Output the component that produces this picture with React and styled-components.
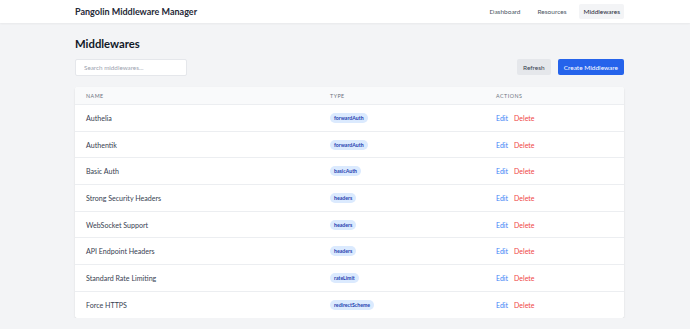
import React from "react";
import styled, { createGlobalStyle } from "styled-components";

const Global = createGlobalStyle`
  html, body { margin: 0; padding: 0; background: #f3f4f6; }
  body { font-family: Lato, "Noto Sans", sans-serif; color: #1f2937; }
  * { box-sizing: border-box; }
`;

const Header = styled.header`
  background: #ffffff;
  height: 23px;
  box-shadow: 0 1px 2px rgba(0,0,0,0.05);
`;

const HeaderInner = styled.div`
  margin-left: 75px;
  width: 549px;
  height: 100%;
  display: flex;
  align-items: center;
  justify-content: space-between;
`;

const Brand = styled.div`
  font-size: 9px;
  font-weight: 700;
  color: #1f2937;
`;

const Nav = styled.nav`
  display: flex;
  align-items: center;
  gap: 9px;
`;

const NavLink = styled.a`
  font-size: 6.5px;
  color: ${(p) => (p.$active ? "#1f2937" : "#4b5563")};
  background: ${(p) => (p.$active ? "#f3f4f6" : "transparent")};
  padding: 4px 4px;
  border-radius: 2px;
  line-height: 7px;
`;

const Main = styled.main`
  margin-left: 75px;
  width: 549px;
  padding-top: 12px;
`;

const Title = styled.h1`
  margin: 0;
  font-size: 11.3px;
  font-weight: 700;
  color: #111827;
  line-height: 17px;
`;

const Toolbar = styled.div`
  margin-top: 7px;
  display: flex;
  align-items: flex-start;
  justify-content: space-between;
`;

const Search = styled.input`
  width: 112px;
  height: 17px;
  border: 1px solid #e5e7eb;
  background: #fff;
  border-radius: 2px;
  padding: 0 8px;
  font-family: inherit;
  font-size: 6.3px;
  outline: none;
  &::placeholder { color: #9ca3af; }
`;

const Buttons = styled.div`
  display: flex;
  gap: 7px;
`;

const Button = styled.button`
  font-family: inherit;
  font-size: 6.5px;
  height: 16px;
  border: none;
  border-radius: 2px;
  padding: 0 ${(p) => (p.$primary ? "6px" : "6px")};
  background: ${(p) => (p.$primary ? "#2563eb" : "#e5e7eb")};
  color: ${(p) => (p.$primary ? "#ffffff" : "#374151")};
`;

const Card = styled.div`
  margin-top: 11px;
  background: #fff;
  border-radius: 3px;
  box-shadow: 0 1px 2px rgba(0,0,0,0.12);
  overflow: hidden;
`;

const Row = styled.div`
  display: grid;
  grid-template-columns: 244px 166px 1fr;
  align-items: center;
  height: ${(p) => (p.$head ? "17px" : "26.7px")};
  background: ${(p) => (p.$head ? "#f9fafb" : "#fff")};
  border-top: ${(p) => (p.$first ? "none" : "1px solid #eceef1")};
`;

const Cell = styled.div`
  padding-left: 11px;
  display: flex;
  align-items: center;
  gap: 6px;
`;

const HeadCell = styled(Cell)`
  font-size: 5.3px;
  letter-spacing: 0.5px;
  color: #6b7280;
  text-transform: uppercase;
`;

const Name = styled.span`
  font-size: 7.1px;
  color: #374151;
  position: relative;
  top: 0.5px;
`;

const Badge = styled.span`
  font-size: 5.2px;
  font-weight: 700;
  color: #1e40af;
  background: #dbeafe;
  border-radius: 6px;
  padding: 2px 4px;
  line-height: 6px;
`;

const Action = styled.a`
  font-size: 7px;
  color: ${(p) => (p.$danger ? "#ef4444" : "#3b82f6")};
`;

const rows = [
  ["Authelia", "forwardAuth"],
  ["Authentik", "forwardAuth"],
  ["Basic Auth", "basicAuth"],
  ["Strong Security Headers", "headers"],
  ["WebSocket Support", "headers"],
  ["API Endpoint Headers", "headers"],
  ["Standard Rate Limiting", "rateLimit"],
  ["Force HTTPS", "redirectScheme"],
];

export default function App() {
  return (
    <>
      <Global />
      <Header>
        <HeaderInner>
          <Brand>Pangolin Middleware Manager</Brand>
          <Nav>
            <NavLink>Dashboard</NavLink>
            <NavLink>Resources</NavLink>
            <NavLink $active>Middlewares</NavLink>
          </Nav>
        </HeaderInner>
      </Header>
      <Main>
        <Title>Middlewares</Title>
        <Toolbar>
          <Search placeholder="Search middlewares..." />
          <Buttons>
            <Button>Refresh</Button>
            <Button $primary>Create Middleware</Button>
          </Buttons>
        </Toolbar>
        <Card>
          <Row $head $first>
            <HeadCell>Name</HeadCell>
            <HeadCell>Type</HeadCell>
            <HeadCell>Actions</HeadCell>
          </Row>
          {rows.map(([n, t]) => (
            <Row key={n}>
              <Cell><Name>{n}</Name></Cell>
              <Cell><Badge>{t}</Badge></Cell>
              <Cell>
                <Action>Edit</Action>
                <Action $danger>Delete</Action>
              </Cell>
            </Row>
          ))}
        </Card>
      </Main>
    </>
  );
}
